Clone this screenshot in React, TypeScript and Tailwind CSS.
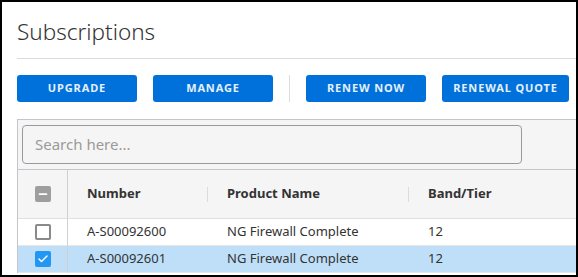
import { Check, Minus } from 'lucide-react';

const font = { fontFamily: '"Noto Sans", "Open Sans", sans-serif' };

const rows = [
  { id: 'A-S00092600', product: 'NG Firewall Complete', tier: '12', selected: false },
  { id: 'A-S00092601', product: 'NG Firewall Complete', tier: '12', selected: true },
];

function ActionButton({ label, wide }: { label: string; wide?: boolean }) {
  return (
    <button
      className={`${wide ? 'w-[127px]' : 'w-[120px]'} h-[27px] shrink-0 rounded-[3px] bg-[#0070da] text-[11px] font-bold tracking-[0.08em] text-white/90 uppercase`}
    >
      {label}
    </button>
  );
}

export default function App() {
  return (
    <div
      className="w-[578px] h-[277px] border-2 border-black bg-white overflow-hidden text-[#333]"
      style={font}
    >
      <div className="pl-[15px] pt-[16px]">
        {/* Header */}
        <h1 className="h-[40px] text-[22.5px] leading-[28px] font-light text-[#333]">Subscriptions</h1>
        <div className="border-t border-[#dcdcdc]" />

        {/* Actions */}
        <div className="mt-[16px] flex items-stretch gap-4">
          <ActionButton label="Upgrade" />
          <ActionButton label="Manage" />
          <div className="w-px bg-[#dcdcdc]" />
          <ActionButton label="Renew Now" />
          <ActionButton label="Renewal Quote" wide />
        </div>

        {/* Table */}
        <div className="mt-[17px] w-[700px] border-l border-t border-[#c4c4cc]">
          <div className="bg-[#f5f5f5] pl-[4px] pt-[5px] pb-[5px] border-b border-[#c4c4cc]">
            <div className="w-[500px] h-[39px] rounded-[4px] border border-[#9a9a9a] bg-[#f5f5f5] flex items-center pl-[12px] text-[15px] text-[#9a9a9a]">
              Search here...
            </div>
          </div>

          <div className="grid grid-cols-[50px_140px_201px_1fr] text-[13px]">
            {/* Header row */}
            <div className="h-[49px] bg-[#f5f5f5] border-r border-[#d0d0d0] border-b border-b-[#e0e0e0] flex items-center justify-center">
              <span className="w-[16px] h-[16px] rounded-[2px] bg-[#9e9e9e] flex items-center justify-center">
                <Minus className="w-[12px] h-[12px] text-white" strokeWidth={3.5} />
              </span>
            </div>
            {['Number', 'Product Name', 'Band/Tier'].map((h, i) => (
              <div
                key={h}
                className="h-[49px] bg-[#f5f5f5] border-b border-[#e0e0e0] flex items-center justify-between pl-[19px] font-bold text-[#333]"
              >
                <span>{h}</span>
                {i < 2 && <span className="w-px h-[15px] bg-[#dcdcdc]" />}
              </div>
            ))}

            {/* Body rows */}
            {rows.map((r) => {
              const bg = r.selected ? 'bg-[#bfdff9]' : 'bg-white';
              return (
                <div key={r.id} className="contents">
                  <div className={`h-[27px] ${bg} border-r border-[#d0d0d0] border-b border-b-[#e6e6e6] flex items-center justify-center`}>
                    {r.selected ? (
                      <span className="w-[16px] h-[16px] rounded-[2px] bg-[#2196f3] flex items-center justify-center">
                        <Check className="w-[12px] h-[12px] text-white" strokeWidth={3} />
                      </span>
                    ) : (
                      <span className="w-[16px] h-[16px] rounded-[2px] border-2 border-[#8a8a8a] bg-white" />
                    )}
                  </div>
                  <div className={`h-[27px] ${bg} border-b border-[#e6e6e6] flex items-center pl-[19px]`}>{r.id}</div>
                  <div className={`h-[27px] ${bg} border-b border-[#e6e6e6] flex items-center pl-[19px]`}>{r.product}</div>
                  <div className={`h-[27px] ${bg} border-b border-[#e6e6e6] flex items-center pl-[19px]`}>{r.tier}</div>
                </div>
              );
            })}
          </div>
        </div>
      </div>
    </div>
  );
}
